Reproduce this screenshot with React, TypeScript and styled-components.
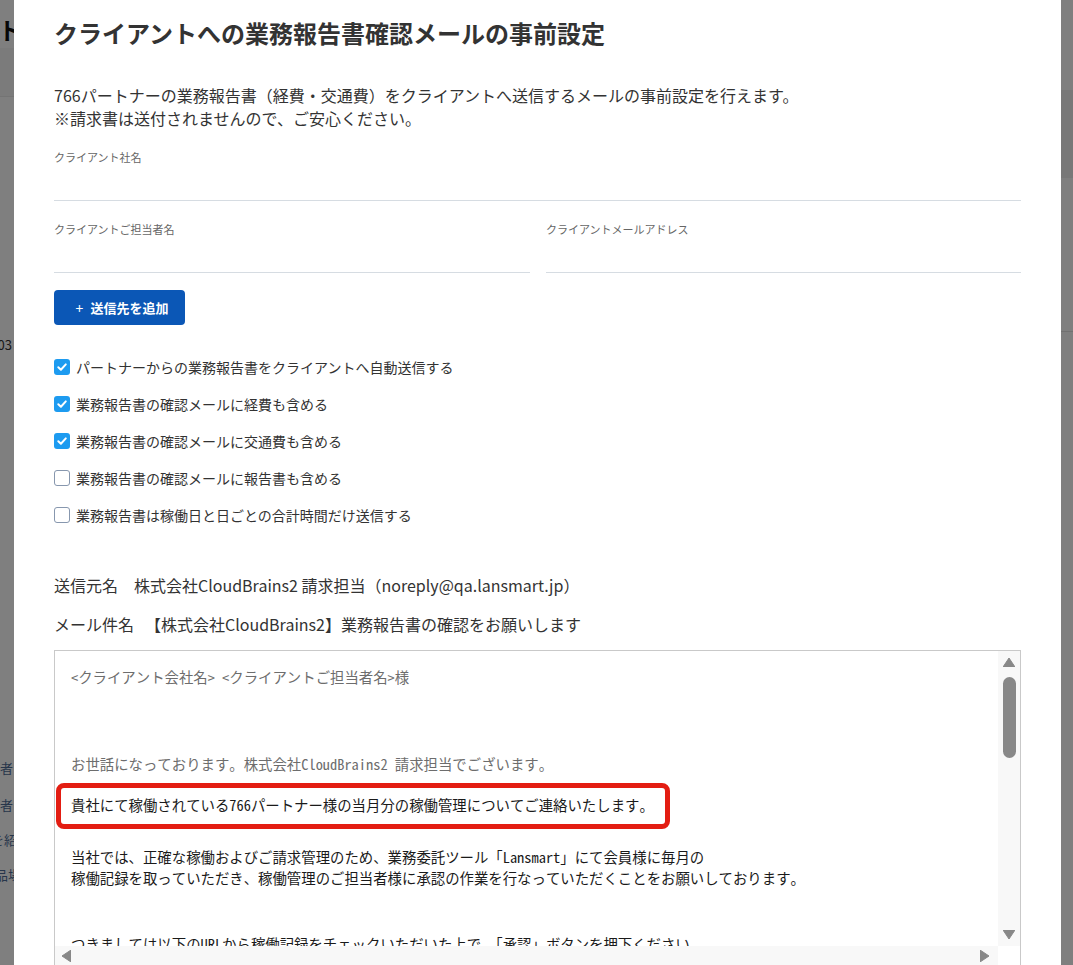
import React from "react";
import styled, { createGlobalStyle } from "styled-components";

const GlobalStyle = createGlobalStyle`
  html, body { margin: 0; padding: 0; }
  body {
    font-family: "Noto Sans CJK JP", "Noto Sans", sans-serif;
    background: #fff;
    overflow: hidden;
  }
  * { box-sizing: border-box; }
`;

const Viewport = styled.div`
  position: relative;
  width: 1073px;
  height: 965px;
  overflow: hidden;
`;

/* ---------- page behind the dialog ---------- */
const Page = styled.div`
  display: flex;
  height: 965px;
  background: #fff;
`;

const PageLeft = styled.div`
  width: 40px;
  flex-shrink: 0;
  display: flex;
  flex-direction: column;
  align-items: flex-end;
`;

const PageMain = styled.div`
  flex: 1;
`;

const PageRight = styled.div`
  width: 30px;
  flex-shrink: 0;
  display: flex;
  flex-direction: column;
`;

const PageTitle = styled.div<{ $end: number }>`
  height: 48px;
  padding-top: 8px;
  padding-right: ${(p) => 40 - p.$end}px;
  font-size: 24px;
  line-height: 44px;
  font-weight: 700;
  color: #111;
  white-space: nowrap;
`;

const Breadcrumb = styled.div<{ $end: number }>`
  height: 49px;
  width: 100%;
  background: #f6f6f6;
  border-bottom: 1px solid #e8e8e8;
  display: flex;
  align-items: flex-start;
  justify-content: flex-end;
  padding-top: 6px;
  padding-right: ${(p) => 40 - p.$end}px;
  color: #999;
  font-size: 13px;
  white-space: nowrap;
`;

const SideText = styled.div<{ $end: number; $top: number; $link?: boolean }>`
  margin-top: ${(p) => p.$top}px;
  padding-right: ${(p) => 40 - p.$end}px;
  font-size: 13px;
  line-height: 20px;
  white-space: nowrap;
  color: ${(p) => (p.$link ? "#4f6c96" : "#333")};
`;

const SidePanel = styled.div`
  margin-top: 90px;
  height: 88px;
  background: #f0f0f0;
`;

const SideDivider = styled.div`
  margin-top: 153px;
  height: 1px;
  background: #e2e2e2;
`;

/* ---------- dialog ---------- */
const Overlay = styled.div`
  position: fixed;
  inset: 0;
  background: rgba(0, 0, 0, 0.5);
  padding-left: 14px;
`;

const Modal = styled.div`
  width: 1047px;
  height: 100%;
  background: #fff;
  padding: 15px 40px 0 40px;
  overflow: hidden;
  color: #333;
`;

const Title = styled.h2`
  margin: 0;
  font-size: 24px;
  line-height: 36px;
  font-weight: 700;
  color: #333;
`;

const Description = styled.p`
  margin: 33px 0 0;
  font-size: 16px;
  line-height: 23px;
  color: #333;
`;

const Field = styled.div<{ $top: number }>`
  margin-top: ${(p) => p.$top}px;
  display: flex;
  flex-direction: column;
`;

const FieldLabel = styled.label`
  font-size: 11px;
  line-height: 16px;
  color: #666;
`;

const FieldInput = styled.div`
  height: 36px;
  border-bottom: 1px solid #d6dce2;
`;

const FieldRow = styled.div`
  display: grid;
  grid-template-columns: 476px 1fr;
  column-gap: 16px;
`;

const AddButton = styled.button`
  margin-top: 17px;
  width: 131px;
  height: 35px;
  border: none;
  border-radius: 4px;
  background: #0b57b6;
  color: #fff;
  display: flex;
  align-items: center;
  justify-content: center;
  gap: 7px;
  padding: 0 0 0 5px;
  font-family: inherit;
  font-size: 13px;
  font-weight: 700;
  cursor: pointer;
`;

const Plus = styled.span`
  font-weight: 400;
  font-size: 14px;
`;

const CheckList = styled.div`
  margin-top: 23px;
  display: flex;
  flex-direction: column;
`;

const CheckRow = styled.label`
  display: flex;
  align-items: center;
  gap: 6px;
  height: 37px;
  font-size: 14px;
  color: #333;
`;

const Box = styled.span<{ $checked: boolean }>`
  width: 16px;
  height: 16px;
  border-radius: 3px;
  flex-shrink: 0;
  display: flex;
  align-items: center;
  justify-content: center;
  background: ${(p) => (p.$checked ? "#1d9bf0" : "#fff")};
  border: ${(p) => (p.$checked ? "none" : "1.5px solid #8797ae")};
`;

const InfoLine = styled.div<{ $top: number; $gap: number }>`
  margin-top: ${(p) => p.$top}px;
  display: flex;
  gap: ${(p) => p.$gap}px;
  font-size: 16px;
  line-height: 24px;
  color: #333;
`;

const MailBox = styled.div`
  margin-top: 14px;
  height: 316px;
  border: 1px solid #c9c9c9;
  display: grid;
  grid-template-columns: 1fr 22px;
  grid-template-rows: 1fr 19px;
`;

const MailBody = styled.div`
  grid-column: 1;
  grid-row: 1;
  overflow: hidden;
  padding: 15px 0 0 16px;
  font-family: "Noto Sans Mono CJK JP", "Noto Sans CJK JP", monospace;
  font-size: 14.4px;
  line-height: 21.6px;
  white-space: nowrap;
`;

const MailLine = styled.div<{ $gap?: number; $muted?: boolean }>`
  margin-top: ${(p) => p.$gap ?? 0}px;
  color: ${(p) => (p.$muted ? "#6d6d6d" : "#1a1a1a")};
`;

const Marked = styled.div<{ $gap: number }>`
  margin-top: ${(p) => p.$gap}px;
  margin-left: -15px;
  width: fit-content;
  padding: 6px 11px 8px 10px;
  border: 5px solid #e31d12;
  border-radius: 8px;
  color: #1a1a1a;
  background: #fff;
`;

const VScroll = styled.div`
  grid-column: 2;
  grid-row: 1;
  background: #f8f8f8;
  display: flex;
  flex-direction: column;
  align-items: center;
  padding: 7px 0 7px;
`;

const Thumb = styled.div`
  margin-top: 10px;
  width: 13px;
  height: 81px;
  border-radius: 7px;
  background: #888;
`;

const Spacer = styled.div`
  flex: 1;
`;

const HScroll = styled.div`
  grid-column: 1;
  grid-row: 2;
  background: #f8f8f8;
  display: flex;
  align-items: center;
  justify-content: space-between;
  padding: 0 9px 0 7px;
`;

const Corner = styled.div`
  grid-column: 2;
  grid-row: 2;
  background: #fff;
`;

const Arrow = ({ dir }: { dir: "up" | "down" | "left" | "right" }) => {
  const pts: Record<string, string> = {
    up: "6,0 12,9 0,9",
    down: "0,0 12,0 6,9",
    left: "9,0 9,12 0,6",
    right: "0,0 9,6 0,12",
  };
  const vertical = dir === "up" || dir === "down";
  return (
    <svg width={vertical ? 12 : 9} height={vertical ? 9 : 12} viewBox={vertical ? "0 0 12 9" : "0 0 9 12"}>
      <polygon points={pts[dir]} fill="#888" strokeLinejoin="round" stroke="#888" strokeWidth="1" />
    </svg>
  );
};

const Check = ({ checked, children }: { checked: boolean; children: React.ReactNode }) => (
  <CheckRow>
    <Box $checked={checked}>
      {checked && (
        <svg width="12" height="12" viewBox="0 0 12 12">
          <path d="M2.3 6.2 L4.9 8.7 L9.8 3.4" fill="none" stroke="#fff" strokeWidth="2" strokeLinecap="round" strokeLinejoin="round" />
        </svg>
      )}
    </Box>
    <span>{children}</span>
  </CheckRow>
);

export default function App() {
  return (
    <Viewport>
      <GlobalStyle />
      <Page>
        <PageLeft>
          <PageTitle $end={22}>業務報告書レポート</PageTitle>
          <Breadcrumb $end={6}>
            ホーム
            <svg width="7" height="12" viewBox="0 0 7 12" style={{ marginLeft: 6, marginTop: 3 }}>
              <path d="M1 1 L6 6 L1 11" fill="none" stroke="#aaa" strokeWidth="1.5" />
            </svg>
          </Breadcrumb>
          <SideText $end={12} $top={238}>2024/03</SideText>
          <SideText $end={13} $top={403} $link>承認者</SideText>
          <SideText $end={13} $top={17} $link>担当者</SideText>
          <SideText $end={30} $top={15} $link>パートナーを紹介</SideText>
          <SideText $end={34} $top={15} $link>納品場所</SideText>
        </PageLeft>
        <PageMain />
        <PageRight>
          <SidePanel />
          <SideDivider />
        </PageRight>
      </Page>

      <Overlay>
        <Modal>
          <Title>クライアントへの業務報告書確認メールの事前設定</Title>
          <Description>
            766パートナーの業務報告書（経費・交通費）をクライアントへ送信するメールの事前設定を行えます。
            <br />
            ※請求書は送付されませんので、ご安心ください。
          </Description>

          <Field $top={19}>
            <FieldLabel>クライアント社名</FieldLabel>
            <FieldInput />
          </Field>

          <FieldRow>
            <Field $top={20}>
              <FieldLabel>クライアントご担当者名</FieldLabel>
              <FieldInput />
            </Field>
            <Field $top={20}>
              <FieldLabel>クライアントメールアドレス</FieldLabel>
              <FieldInput />
            </Field>
          </FieldRow>

          <AddButton>
            <Plus>+</Plus>
            送信先を追加
          </AddButton>

          <CheckList>
            <Check checked>パートナーからの業務報告書をクライアントへ自動送信する</Check>
            <Check checked>業務報告書の確認メールに経費も含める</Check>
            <Check checked>業務報告書の確認メールに交通費も含める</Check>
            <Check checked={false}>業務報告書の確認メールに報告書も含める</Check>
            <Check checked={false}>業務報告書は稼働日と日ごとの合計時間だけ送信する</Check>
          </CheckList>

          <InfoLine $top={40} $gap={16}>
            <span>送信元名</span>
            <span>株式会社CloudBrains2 請求担当（noreply@qa.lansmart.jp）</span>
          </InfoLine>
          <InfoLine $top={15} $gap={11}>
            <span>メール件名</span>
            <span>【株式会社CloudBrains2】業務報告書の確認をお願いします</span>
          </InfoLine>

          <MailBox>
            <MailBody>
              <MailLine $muted>{"<クライアント会社名> <クライアントご担当者名>様"}</MailLine>
              <MailLine $muted $gap={65}>
                お世話になっております。株式会社CloudBrains2 請求担当でございます。
              </MailLine>
              <Marked $gap={9}>貴社にて稼働されている766パートナー様の当月分の稼働管理についてご連絡いたします。</Marked>
              <MailLine $gap={17}>
                当社では、正確な稼働およびご請求管理のため、業務委託ツール「Lansmart」にて会員様に毎月の
              </MailLine>
              <MailLine>
                稼働記録を取っていただき、稼働管理のご担当者様に承認の作業を行なっていただくことをお願いしております。
              </MailLine>
              <MailLine $gap={44}>
                つきましては以下のURLから稼働記録をチェックいただいた上で、「承認」ボタンを押下ください。
              </MailLine>
            </MailBody>
            <VScroll>
              <Arrow dir="up" />
              <Thumb />
              <Spacer />
              <Arrow dir="down" />
            </VScroll>
            <HScroll>
              <Arrow dir="left" />
              <Arrow dir="right" />
            </HScroll>
            <Corner />
          </MailBox>
        </Modal>
      </Overlay>
    </Viewport>
  );
}
